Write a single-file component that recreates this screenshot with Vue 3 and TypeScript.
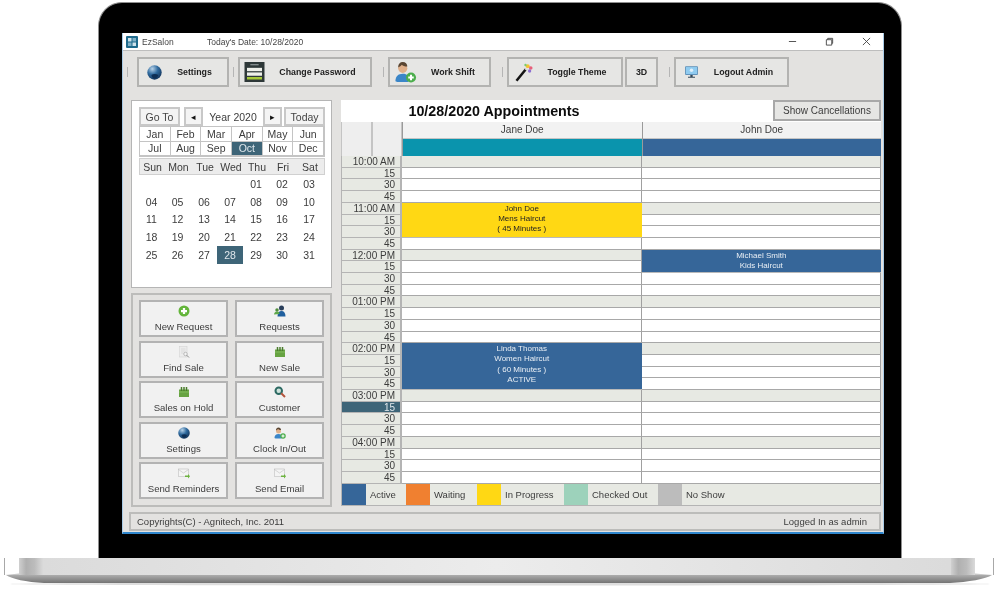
<script setup lang="ts">
const tools = [
  { label: 'Settings', icon: 'globe', w: 92, iw: 15, ih: 15, il: 8, before: 4, after: 9 },
  { label: 'Change Password', icon: 'form', w: 134, iw: 21, ih: 20, il: 4, before: 4, after: 4 },
  { label: 'Work Shift', icon: 'userplus', w: 103, iw: 23, ih: 22, il: 4, before: 11, after: 4 },
  { label: 'Toggle Theme', icon: 'wand', w: 116, iw: 18, ih: 19, il: 6, before: 11, after: 4 },
  { label: '3D', icon: '', w: 33, iw: 0, ih: 0, il: 0, before: 0, after: 0 },
  { label: 'Logout Admin', icon: 'monitor', w: 115, iw: 17, ih: 14, il: 7, before: 11, after: 4 },
]
const months = ['Jan', 'Feb', 'Mar', 'Apr', 'May', 'Jun', 'Jul', 'Aug', 'Sep', 'Oct', 'Nov', 'Dec']
const weekdays = ['Sun', 'Mon', 'Tue', 'Wed', 'Thu', 'Fri', 'Sat']
const days: string[] = ['', '', '', '', '01', '02', '03']
for (let d = 4; d <= 31; d++) days.push(String(d).padStart(2, '0'))

const actions = [
  { label: 'New Request', icon: 'plus' },
  { label: 'Requests', icon: 'users' },
  { label: 'Find Sale', icon: 'doc' },
  { label: 'New Sale', icon: 'cal' },
  { label: 'Sales on Hold', icon: 'cal' },
  { label: 'Customer', icon: 'lens' },
  { label: 'Settings', icon: 'globe' },
  { label: 'Clock In/Out', icon: 'userplus' },
  { label: 'Send Reminders', icon: 'mail' },
  { label: 'Send Email', icon: 'mail' },
]

const hours = ['10:00 AM', '11:00 AM', '12:00 PM', '01:00 PM', '02:00 PM', '03:00 PM', '04:00 PM']
const slots: { label: string; hour: boolean; row: number; active: boolean }[] = []
hours.forEach((h, i) => {
  ;[h, '15', '30', '45'].forEach((label, j) => {
    const row = i * 4 + j
    slots.push({ label, hour: j === 0, row, active: row === 21 })
  })
})

const appts = [
  { col: 2, row: 4, span: 3, bg: '#ffd814', fg: '#222', lines: ['John Doe', 'Mens Haircut', '( 45 Minutes )'] },
  { col: 3, row: 8, span: 2, bg: '#366699', fg: '#e8eef4', lines: ['Michael Smith', 'Kids Haircut'] },
  { col: 2, row: 16, span: 4, bg: '#366699', fg: '#e8eef4', lines: ['Linda Thomas', 'Women Haircut', '( 60 Minutes )', 'ACTIVE'] },
]

const legend = [
  { label: 'Active', color: '#366699', w: 64 },
  { label: 'Waiting', color: '#f08030', w: 71 },
  { label: 'In Progress', color: '#ffd814', w: 87 },
  { label: 'Checked Out', color: '#9dd2bb', w: 94 },
  { label: 'No Show', color: '#bcbcbc', w: 100 },
]
</script>

<template>
  <div class="page">
    <svg class="defs" width="0" height="0" aria-hidden="true">
      <defs>
        <radialGradient id="gl" cx="0.35" cy="0.25" r="0.85">
          <stop offset="0" stop-color="#b7d2e8" />
          <stop offset="0.45" stop-color="#2f6a9e" />
          <stop offset="1" stop-color="#0f2c50" />
        </radialGradient>
        <symbol id="i-globe" viewBox="0 0 24 24">
          <circle cx="12" cy="12" r="11.5" fill="url(#gl)" />
          <path d="M7 16c3-2 8-2 11 0-1 4-4 6-6 6s-4-2-5-6z" fill="#0e2f55" />
        </symbol>
        <symbol id="i-form" viewBox="0 0 24 24">
          <rect width="24" height="24" fill="#2e3838" />
          <rect x="7" y="2.5" width="10" height="1.5" fill="#8b9494" />
          <rect x="3" y="7" width="18" height="4" fill="#eef0ea" />
          <rect x="3" y="12.5" width="18" height="4" fill="#eef0ea" />
          <rect x="3" y="18" width="18" height="3" fill="#a6c93a" />
        </symbol>
        <symbol id="i-userplus" viewBox="0 0 24 24">
          <path d="M1 22c0-5 3-8 8-8s7 3 7 6l-1 3H3z" fill="#3b86c8" />
          <circle cx="9" cy="8" r="5" fill="#e0b08a" />
          <path d="M4 7c0-4 2-6 5-6s5 2 5 5c-3 0-5-1-6-2-1 1-2 2-4 3z" fill="#5a4632" />
          <circle cx="18" cy="18" r="5.5" fill="#4cae4c" />
          <path d="M15 18h6M18 15v6" stroke="#fff" stroke-width="2.2" />
        </symbol>
        <symbol id="i-wand" viewBox="0 0 24 24">
          <path d="M2 23 15 7" stroke="#151515" stroke-width="3.4" />
          <path d="M14 8.5 16 6" stroke="#ddd" stroke-width="3.4" />
          <circle cx="17" cy="3.5" r="2.6" fill="#f2c230" />
          <circle cx="21" cy="6" r="2.4" fill="#e8607a" />
          <circle cx="19.5" cy="10" r="2.2" fill="#8d6fd0" />
          <circle cx="14" cy="2" r="1.6" fill="#7ccb6a" />
        </symbol>
        <symbol id="i-monitor" viewBox="0 0 24 24">
          <rect x="1" y="2" width="22" height="15" rx="1.5" fill="#5d90b8" />
          <rect x="2.5" y="3.5" width="19" height="12" fill="#8fcbf0" />
          <circle cx="12" cy="9" r="3" fill="#fff" opacity="0.7" />
          <path d="M10 17h4v3h-4zM6 20h12v2H6z" fill="#34495a" />
        </symbol>
        <symbol id="i-plus" viewBox="0 0 24 24">
          <circle cx="12" cy="12" r="11" fill="#63b53a" />
          <path d="M6 12h12M12 6v12" stroke="#fff" stroke-width="4.5" />
        </symbol>
        <symbol id="i-users" viewBox="0 0 24 24">
          <circle cx="15" cy="6" r="5" fill="#2a3f5c" />
          <path d="M7 23c0-7 3-11 8-11s8 4 8 11z" fill="#1f5f9e" />
          <circle cx="6" cy="10" r="3.5" fill="#4f8d3d" />
          <path d="M0 19c0-3 2-6 6-6s5 2 5 5z" fill="#5fa84a" />
        </symbol>
        <symbol id="i-doc" viewBox="0 0 24 24">
          <rect x="3" y="1" width="15" height="21" fill="#ececec" stroke="#cfcfcf" />
          <path d="M6 6h9M6 10h9M6 14h5" stroke="#c9c9c9" />
          <circle cx="15" cy="16" r="3.5" fill="#f4f4f4" stroke="#a9a9a9" stroke-width="1.5" />
          <path d="M17.5 18.5 22 23" stroke="#8a8a8a" stroke-width="2" />
        </symbol>
        <symbol id="i-cal" viewBox="0 0 24 24">
          <rect x="2" y="7" width="20" height="15" fill="#67a342" />
          <path d="M2 12h20" stroke="#8cc465" stroke-width="1.5" />
          <path d="M7 2v8M12 2v8M17 2v8" stroke="#4a7c2c" stroke-width="3" />
        </symbol>
        <symbol id="i-lens" viewBox="0 0 24 24">
          <circle cx="9.5" cy="9.5" r="6.5" fill="#cfe3dc" stroke="#2d6a63" stroke-width="4" />
          <path d="M14.5 14.5 22 22" stroke="#b4553d" stroke-width="4" />
        </symbol>
        <symbol id="i-mail" viewBox="0 0 24 24">
          <rect x="1" y="4" width="20" height="15" fill="#f4f4f4" stroke="#b5b5b5" />
          <path d="m1 5 10 7 10-7" fill="none" stroke="#b5b5b5" />
          <path d="M14 17h6v-3l4 4.500-4 4.500v-3h-6z" fill="#6cb33f" />
        </symbol>
      </defs>
    </svg>

    <div class="bezel">
      <div class="screen">
        <header class="titlebar">
          <svg class="app-icon" viewBox="0 0 12 12">
            <rect width="12" height="12" rx="1" fill="#1e6a8c" />
            <rect x="2" y="2" width="3.500" height="3.500" fill="#cfe3ec" />
            <rect x="6.500" y="2" width="3.500" height="3.500" fill="#7fb0c6" />
            <rect x="2" y="6.500" width="3.500" height="3.500" fill="#7fb0c6" />
            <rect x="6.500" y="6.500" width="3.500" height="3.500" fill="#cfe3ec" />
          </svg>
          <span class="app-name">EzSalon</span>
          <span class="app-date">Today's Date: 10/28/2020</span>
          <div class="win-controls">
            <svg viewBox="0 0 10 10"><path d="M1 5h8" stroke="#444" /></svg>
            <svg viewBox="0 0 10 10"><path d="M1.500 3h6v6h-6zM3 3V1.500h5.500V7H7.500" fill="none" stroke="#444" /></svg>
            <svg viewBox="0 0 10 10"><path d="m1 1 8 8M9 1l-8 8" stroke="#444" /></svg>
          </div>
        </header>

        <nav class="toolbar">
          <template v-for="t in tools" :key="t.label">
            <span v-if="t.label !== '3D'" class="grip" :style="{ marginLeft: t.before + 'px', marginRight: t.after + 'px' }"></span>
            <button class="tool" :class="{ 'tool-3d': t.label === '3D' }" :style="{ width: t.w + 'px' }">
              <svg v-if="t.icon" :style="{ width: t.iw + 'px', height: t.ih + 'px', marginLeft: t.il + 'px' }">
                <use :href="'#i-' + t.icon" width="100%" height="100%" />
              </svg>
              <span class="tool-label">{{ t.label }}</span>
            </button>
          </template>
        </nav>

        <main class="main">
          <div class="left">
            <section class="calendar">
              <div class="cal-top">
                <button class="cal-btn goto">Go To</button>
                <button class="cal-btn arrow">◂</button>
                <span class="year">Year 2020</span>
                <button class="cal-btn arrow">▸</button>
                <button class="cal-btn today">Today</button>
              </div>
              <div class="months">
                <span v-for="m in months" :key="m" class="month" :class="{ sel: m === 'Oct' }">{{ m }}</span>
              </div>
              <div class="weekdays">
                <span v-for="w in weekdays" :key="w">{{ w }}</span>
              </div>
              <div class="days">
                <span v-for="(d, i) in days" :key="i" class="day" :class="{ sel: d === '28' }">{{ d }}</span>
              </div>
            </section>

            <section class="actions">
              <button v-for="a in actions" :key="a.label" class="action">
                <svg class="action-icon"><use :href="'#i-' + a.icon" width="100%" height="100%" /></svg>
                <span>{{ a.label }}</span>
              </button>
            </section>
          </div>

          <section class="sched">
            <div class="sched-title">
              <h1>10/28/2020 Appointments</h1>
              <button class="cancel">Show Cancellations</button>
            </div>
            <div class="sched-head">
              <div class="blank"></div>
              <div class="blank"></div>
              <div class="staff">
                <div class="staff-name">Jane Doe</div>
                <div class="staff-color teal"></div>
              </div>
              <div class="staff">
                <div class="staff-name">John Doe</div>
                <div class="staff-color blue"></div>
              </div>
            </div>
            <div class="grid">
              <template v-for="s in slots" :key="s.row">
                <div class="time" :class="{ now: s.active }" :style="{ gridRow: s.row + 1 }">{{ s.label }}</div>
                <div class="cell" :class="{ hour: s.hour }" :style="{ gridRow: s.row + 1, gridColumn: 2 }"></div>
                <div class="cell" :class="{ hour: s.hour }" :style="{ gridRow: s.row + 1, gridColumn: 3 }"></div>
              </template>
              <div
                v-for="a in appts"
                :key="a.lines[0]"
                class="appt"
                :style="{ gridColumn: a.col, gridRow: a.row + 1 + ' / span ' + a.span, background: a.bg, color: a.fg }"
              >
                <span v-for="l in a.lines" :key="l">{{ l }}</span>
              </div>
            </div>
            <div class="legend">
              <div v-for="l in legend" :key="l.label" class="legend-item" :style="{ width: l.w + 'px' }">
                <i :style="{ background: l.color }"></i>
                <span>{{ l.label }}</span>
              </div>
            </div>
          </section>
        </main>

        <footer class="status">
          <span>Copyrights(C) - Agnitech, Inc. 2011</span>
          <span>Logged In as admin</span>
        </footer>
      </div>
    </div>

    <svg class="base" width="1000" height="30" viewBox="0 0 1000 30">
      <defs>
        <linearGradient id="silver" x1="0" x2="1" y1="0" y2="0">
          <stop offset="0" stop-color="#dadada" />
          <stop offset="0.5" stop-color="#ececec" />
          <stop offset="1" stop-color="#dadada" />
        </linearGradient>
        <linearGradient id="notchL" x1="0" x2="1" y1="0" y2="0">
          <stop offset="0" stop-color="#d0d0d0" />
          <stop offset="0.3" stop-color="#b0b0b0" />
          <stop offset="0.65" stop-color="#bcbcbc" />
          <stop offset="1" stop-color="#dadada" />
        </linearGradient>
        <linearGradient id="band" x1="0" x2="0" y1="0" y2="1">
          <stop offset="0" stop-color="#adadad" />
          <stop offset="1" stop-color="#747474" />
        </linearGradient>
      </defs>
      <ellipse cx="500" cy="26" rx="490" ry="1.500" fill="#dedede" />
      <path d="M4.500 0v17M993.500 0v17" fill="none" stroke="#a8a8a8" />
      <path d="M19 0H975V17H19z" fill="url(#silver)" />
      <path d="M19 0H43V17H19z" fill="url(#notchL)" />
      <path d="M975 0H951V17H975z" fill="url(#notchL)" />
      <path d="M5 17H19V15.500zM993 17H975V15.500z" fill="#c8c8c8" />
      <path d="M6 17C12 21 26 24 44 25H950C968 24 986 21 992 17z" fill="url(#band)" />
    </svg>
  </div>
</template>

<style>
html, body { margin: 0; background: #fff; overflow: hidden; }
</style>

<style scoped>
* { box-sizing: border-box; }
button { font: inherit; color: inherit; padding: 0; margin: 0; }
.page {
  width: 1000px;
  height: 597px;
  padding-top: 2px;
  display: flex;
  flex-direction: column;
  font-family: "Liberation Sans", Arial, sans-serif;
  font-size: 10.500px;
  color: #3c3c3c;
  background: #fff;
}
.defs { position: absolute; }
.bezel {
  width: 804px;
  height: 556px;
  margin-left: 98px;
  flex: none;
  background: #000;
  border: 1px solid #8f8f8f;
  border-bottom: 0;
  border-radius: 24px 24px 0 0;
  padding: 30px 0 0 23px;
}
.screen {
  width: 762px;
  height: 501px;
  background: #e3e2e0;
  border-left: 1px solid #a9cbe6;
  border-right: 1px solid #a9cbe6;
  border-bottom: 2px solid #2f86cc;
  display: flex;
  flex-direction: column;
  filter: blur(0.4px);
}
.titlebar {
  height: 17px;
  flex: none;
  background: #fff;
  display: flex;
  align-items: center;
  font-size: 8.500px;
  color: #444;
  padding-left: 3px;
}
.app-icon { width: 12px; height: 12px; }
.app-name { margin-left: 4px; width: 65px; }
.win-controls {
  margin-left: auto;
  width: 95px;
  padding-right: 12px;
  display: flex;
  justify-content: space-between;
}
.win-controls svg { width: 9px; height: 9px; }
.toolbar {
  height: 42px;
  flex: none;
  border-top: 1px solid #bdbdbd;
  padding-top: 6px;
  display: flex;
  align-items: flex-start;
}
.grip {
  width: 1px;
  height: 10px;
  background: #b5b5b5;
  margin-top: 10px;
  flex: none;
}
.tool {
  height: 30px;
  flex: none;
  display: flex;
  align-items: center;
  background: #e6e6e4;
  border: 2px solid #b3b3b1;
  font-weight: 700;
  font-size: 8.800px;
  color: #222;
}
.tool-3d { margin-left: 2px; }
.tool svg { flex: none; }
.tool-label { flex: 1; text-align: center; }
.main {
  flex: 1;
  min-height: 0;
  display: flex;
  gap: 9px;
  padding: 8px 0 0 8px;
}
.left {
  width: 201px;
  height: 407px;
  display: flex;
  flex-direction: column;
  gap: 5px;
}
.calendar {
  height: 188px;
  background: #fff;
  border: 1px solid #b5b5b5;
  padding: 6px 6px 0 7px;
  font-size: 10.500px;
}
.cal-top {
  display: flex;
  align-items: center;
  height: 19px;
}
.cal-btn {
  background: #f4f4f4;
  border: 2px solid #c8c8c8;
  height: 19px;
  color: #444;
}
.goto { width: 41px; }
.today { width: 41px; margin-left: 2px; }
.arrow { width: 19px; margin-left: 4px; font-size: 9px; color: #111; }
.arrow:nth-of-type(3) { margin-left: 0; }
.year { width: 61px; text-align: center; }
.months {
  height: 31px;
  display: grid;
  grid-template-columns: repeat(6, 1fr);
  grid-template-rows: repeat(2, 1fr);
  width: 186px;
  border: 1px solid #c4c4c4;
}
.month {
  display: flex;
  align-items: center;
  justify-content: center;
  border-right: 1px solid #c4c4c4;
  border-bottom: 1px solid #c4c4c4;
}
.month.sel { background: #3e6578; color: #dfe7ec; }
.weekdays {
  width: 186px;
  height: 17px;
  margin-top: 1px;
  background: #ececec;
  border: 1px solid #d0d0d0;
  display: grid;
  grid-template-columns: 25px 27px 26px 26px 26px 26px 28px;
  align-items: center;
  text-align: center;
}
.days {
  width: 186px;
  display: grid;
  grid-template-columns: 25px 27px 26px 26px 26px 26px 28px;
  grid-auto-rows: 17.800px;
}
.day {
  display: flex;
  align-items: center;
  justify-content: center;
}
.day.sel { background: #3e6578; color: #dfe7ec; }
.actions {
  height: 214px;
  border: 2px solid #bcbcba;
  padding: 5px 6px 0;
  display: grid;
  grid-template-columns: 89px 89px;
  grid-auto-rows: 37px;
  column-gap: 7px;
  row-gap: 3.500px;
}
.action {
  background: #f1f1f1;
  border: 2px solid #b3b3b3;
  display: flex;
  flex-direction: column;
  align-items: center;
  padding-top: 3px;
  gap: 4px;
  color: #3c3c3c;
  font-size: 9.600px;
}
.action-icon { width: 12px; height: 12px; flex: none; }
.sched {
  width: 540px;
  height: 406px;
  background: #fff;
  display: flex;
  flex-direction: column;
}
.sched-title {
  height: 21px;
  flex: none;
  display: flex;
  align-items: center;
}
.sched-title h1 {
  flex: 1;
  margin: 0;
  font-size: 14.300px;
  font-weight: 700;
  color: #0c0c0c;
  text-align: center;
  padding-right: 126px;
}
.cancel {
  width: 108px;
  height: 21px;
  background: #e6e6e4;
  border: 2px solid #a8a8a8;
  font-size: 10px;
}
.sched-head {
  height: 34px;
  flex: none;
  margin-top: 1px;
  display: grid;
  grid-template-columns: 31px 30px 239.500px 1fr;
  background: #c4c4c4;
}
.blank {
  background: #eeeeee;
  border-left: 1px solid #c4c4c4;
  border-right: 1px solid #c4c4c4;
}
.staff { display: flex; flex-direction: column; gap: 1px; border-left: 1px solid #9a9a9a; }
.staff-name {
  height: 16px;
  background: #f2f2f2;
  text-align: center;
  line-height: 16px;
  font-size: 10px;
}
.staff-color { flex: 1; }
.teal { background: #0a94ad; }
.blue { background: #366699; }
.grid {
  height: 328px;
  flex: none;
  display: grid;
  grid-template-columns: 61px 239.500px 1fr;
  grid-template-rows: repeat(28, 11.710px);
  background: #fff;
  font-size: 10px;
}
.grid > * { min-height: 0; overflow: hidden; }
.time {
  grid-column: 1;
  background: #e7e9e3;
  border: 1px solid #b4b4b4;
  border-width: 0 2px 1px 1px;
  text-align: right;
  padding-right: 5px;
  line-height: 11px;
  color: #3c3c3c;
}
.time.now { background: #3e6578; color: #dfe7ec; }
.cell {
  border-bottom: 1px solid #a8a8a8;
  border-right: 1px solid #a0a0a0;
  background: #fff;
}
.cell.hour { background: #e7e9e3; }
.appt {
  z-index: 1;
  display: flex;
  flex-direction: column;
  align-items: center;
  padding-top: 1px;
  line-height: 10.200px;
  font-size: 8px;
  border-bottom: 1px solid #b9b9b9;
}
.legend {
  flex: 1;
  display: flex;
  background: #e7e9e3;
  border: 1px solid #b4b4b4;
  border-top: 0;
}
.legend-item {
  display: flex;
  align-items: center;
  gap: 4px;
  font-size: 9.500px;
}
.legend-item i { width: 24px; height: 100%; display: block; }
.status {
  height: 19px;
  flex: none;
  margin: 0 0 1px 6px;
  width: 752px;
  border: 2px solid #bcbcba;
  display: flex;
  align-items: center;
  justify-content: space-between;
  padding: 0 12px 0 6px;
  font-size: 9.500px;
  color: #3c3c3c;
}
.base { flex: none; display: block; }
</style>
